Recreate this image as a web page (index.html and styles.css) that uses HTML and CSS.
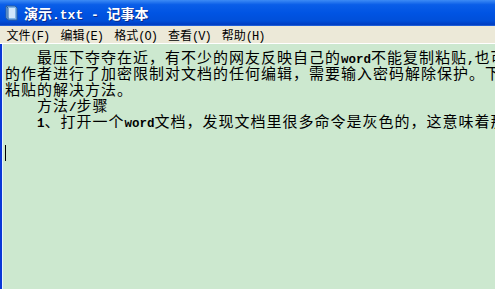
FILE: index.html
```html
<!DOCTYPE html>
<html lang="zh-CN">

<head>
    <meta charset="UTF-8">
    <title>演示.txt - 记事本</title>
    <link rel="stylesheet" href="styles.css">
</head>

<body>
    <div class="window">
        <!-- タイトルバー -->
        <div class="titlebar">
            <svg class="app-icon" width="14" height="16" viewBox="0 0 14 16">
                <path d="M2 1 L11 1 L13 3 L13 15 L4 15 L2 13 Z" fill="#7fb4e8" stroke="#2d5f9e" stroke-width="1"/>
                <path d="M4 3 L11 3 L11 13 L5 13 L4 12 Z" fill="#cfe6fb"/>
                <path d="M2 1 L4 3 L4 15" fill="none" stroke="#2d5f9e" stroke-width="1"/>
            </svg>
            <span class="title">演示<span class="ascii">.txt - </span>记事本</span>
        </div>
        <!-- メニュー -->
        <div class="menubar">
            <span class="menu">文件<span class="key">(F)</span></span>
            <span class="menu">编辑<span class="key">(E)</span></span>
            <span class="menu">格式<span class="key">(O)</span></span>
            <span class="menu">查看<span class="key">(V)</span></span>
            <span class="menu">帮助<span class="key">(H)</span></span>
        </div>
        <!-- 本文 -->
        <div class="editor">
            <div class="line">　　最压下夺夺在近，有不少的网友反映自己的<span class="ascii">word</span>不能复制粘贴<span class="ascii">,</span>也可以</div>
            <div class="line">的作者进行了加密限制对文档的任何编辑，需要输入密码解除保护。下面</div>
            <div class="line">粘贴的解决方法。</div>
            <div class="line">　　方法<span class="ascii">/</span>步骤</div>
            <div class="line">　　<span class="ascii">1</span>、打开一个<span class="ascii">word</span>文档，发现文档里很多命令是灰色的，这意味着那</div>
            <div class="line"></div>
            <div class="line"><span class="caret"></span></div>
        </div>
    </div>
</body>

</html>
```

FILE: styles.css
```css
/* ページ全体 */
body {
    margin: 0;
    width: 495px;
    height: 289px;
    overflow: hidden;
    font-family: "Noto Sans CJK SC", sans-serif;
}

.window {
    height: 289px;
    display: flex;
    flex-direction: column;
    border-left: 3px solid #0838d6;
    box-sizing: border-box;
}

/* XPっぽい青いバー */
.titlebar {
    height: 26px;
    margin-left: -3px;
    padding-left: 4px;
    display: flex;
    align-items: center;
    gap: 6px;
    background: linear-gradient(180deg, #3d8bf5 0%, #0a5ee8 18%, #0054e3 50%, #004fd9 80%, #003ec2 94%, #2a6be0 100%);
    color: #ffffff;
}

.app-icon {
    flex: none;
}

.title {
    font-size: 14px;
    font-weight: bold;
    white-space: nowrap;
    text-shadow: 1px 1px 0 #0a2a8a;
}

.title .ascii {
    font-family: "Liberation Mono", monospace;
    font-size: 13px;
    font-weight: bold;
}

/* メニュー */
.menubar {
    height: 17px;
    display: flex;
    align-items: center;
    margin-left: -3px;
    padding-left: 1px;
    background: #ece9d8;
    border-bottom: 1px solid #ffffff;
    font-size: 12px;
    color: #000000;
}

.menu {
    padding: 0 5.6px;
    white-space: nowrap;
}

.key {
    font-family: "Liberation Mono", monospace;
    font-size: 12px;
    letter-spacing: -1px;
}

/* 本文エリア */
.editor {
    flex: 1;
    padding: 5px 0 0 2px;
    background: #cce8cf;
    border-left: 1px solid #e8f4ff;
    margin-left: -1px;
    overflow: hidden;
    font-size: 15px;
    letter-spacing: 1px;
    line-height: 16px;
    color: #000000;
}

.line {
    height: 16px;
    white-space: nowrap;
}

.editor .ascii {
    font-family: "Liberation Mono", monospace;
    font-weight: bold;
    font-size: 12.5px;
    letter-spacing: 0;
}

.caret {
    display: inline-block;
    width: 1px;
    height: 16px;
    background: #000000;
    vertical-align: top;
}
```
